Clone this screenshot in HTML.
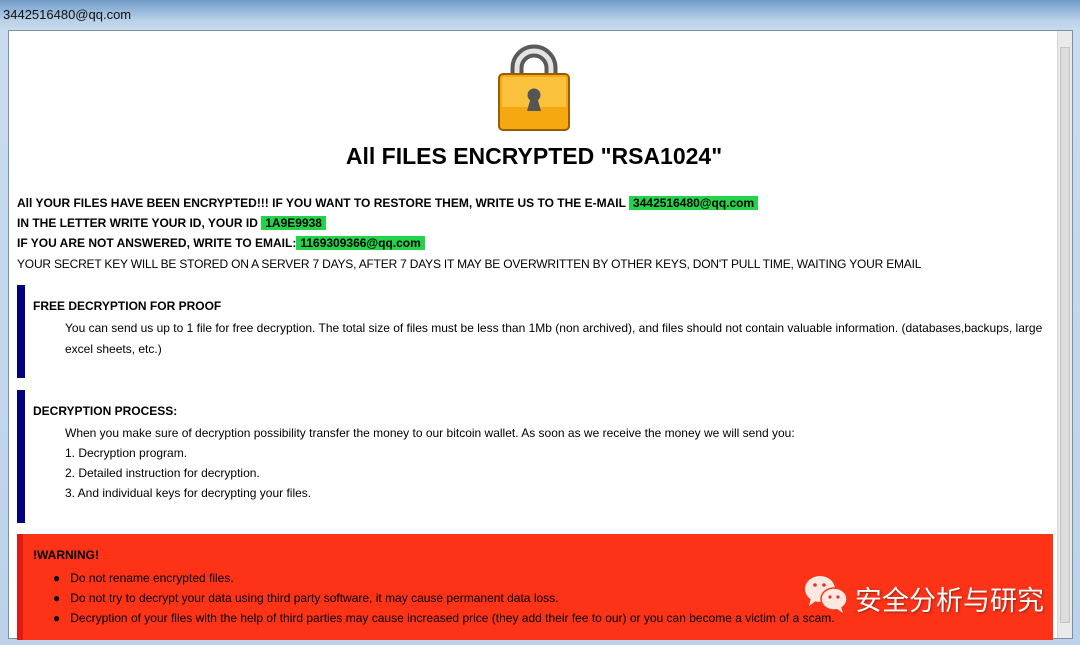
<!DOCTYPE html>
<html><head><meta charset="utf-8"><style>
*{margin:0;padding:0;box-sizing:border-box}
body{width:1080px;height:645px;overflow:hidden;background:#8fb3d6;font-family:"Liberation Sans",sans-serif;position:relative}
.frame{position:absolute;left:0;top:0;width:1080px;height:645px;background:linear-gradient(#6f9cc8 0,#b8d0e8 20px,#c9dcef 30px,#bcd2ea 100%)}
.tt{position:absolute;left:3px;top:7px;font-size:13px;color:#111}
.content{position:absolute;left:8px;top:30px;width:1065px;height:609px;background:#fff;border:1px solid #7d8fa3}
.sb{position:absolute;right:0;top:0;width:15px;height:100%;background:#eaeaea;border-left:1px solid #d5d5d5}
.sb .th{position:absolute;left:2px;top:16px;width:10px;height:576px;background:#dcdcdc;border:1px solid #c4c4c4}
.t{position:absolute;white-space:nowrap;font-size:12px;color:#000}
.b{font-weight:bold}
.g{background:#23d34a;padding:0 4px}
.bar{position:absolute;left:8px;width:8px;background:#000080}
.red{position:absolute;left:8px;top:503px;width:1036px;height:106px;background:#fd3318;border-left:6px solid #e01a10}
</style></head><body>
<div class="frame"></div>
<div class="tt">3442516480@qq.com</div>
<div class="content">
<svg style="position:absolute;left:487px;top:10px" width="76" height="92" viewBox="0 0 76 92">
<path d="M21 42 V27 a17 17 0 0 1 34 0 V42" fill="none" stroke="#5a5a5a" stroke-width="13"/>
<path d="M21 42 V27 a17 17 0 0 1 34 0 V42" fill="none" stroke="#e4e4e4" stroke-width="5"/>
<rect x="3" y="33" width="70" height="56" rx="4" fill="#f6a810" stroke="#9a5c00" stroke-width="2"/>
<rect x="6" y="36" width="64" height="30" fill="#fcd560" opacity=".55"/>
<circle cx="38" cy="54" r="6.5" fill="#555"/><path d="M35 56 L31 70 H45 L41 56Z" fill="#555"/>
</svg>
<div class="t b" style="left:0;width:1050px;text-align:center;top:112px;font-size:23px">All FILES ENCRYPTED "RSA1024"</div>
<div class="t b" style="left:8px;top:165px">All YOUR FILES HAVE BEEN ENCRYPTED!!! IF YOU WANT TO RESTORE THEM, WRITE US TO THE E-MAIL <span class="g">3442516480@qq.com</span></div>
<div class="t b" style="left:8px;top:185px">IN THE LETTER WRITE YOUR ID, YOUR ID <span class="g">1A9E9938</span></div>
<div class="t b" style="left:8px;top:205px">IF YOU ARE NOT ANSWERED, WRITE TO EMAIL:<span class="g">1169309366@qq.com</span></div>
<div class="t" style="left:8px;top:226px;letter-spacing:-0.2px">YOUR SECRET KEY WILL BE STORED ON A SERVER 7 DAYS, AFTER 7 DAYS IT MAY BE OVERWRITTEN BY OTHER KEYS, DON'T PULL TIME, WAITING YOUR EMAIL</div>
<div class="bar" style="top:254px;height:93px"></div>
<div class="t b" style="left:24px;top:268px">FREE DECRYPTION FOR PROOF</div>
<div class="t" style="left:56px;top:290px">You can send us up to 1 file for free decryption. The total size of files must be less than 1Mb (non archived), and files should not contain valuable information. (databases,backups, large</div>
<div class="t" style="left:56px;top:311px">excel sheets, etc.)</div>
<div class="bar" style="top:359px;height:133px"></div>
<div class="t b" style="left:24px;top:373px">DECRYPTION PROCESS:</div>
<div class="t" style="left:56px;top:395px">When you make sure of decryption possibility transfer the money to our bitcoin wallet. As soon as we receive the money we will send you:</div>
<div class="t" style="left:56px;top:415px">1. Decryption program.</div>
<div class="t" style="left:56px;top:435px">2. Detailed instruction for decryption.</div>
<div class="t" style="left:56px;top:455px">3. And individual keys for decrypting your files.</div>
<div class="red">
<div class="t b" style="left:10px;top:14px">!WARNING!</div>
<div class="t" style="left:30px;top:37px">●&nbsp;&nbsp;&nbsp;Do not rename encrypted files.</div>
<div class="t" style="left:30px;top:57px">●&nbsp;&nbsp;&nbsp;Do not try to decrypt your data using third party software, it may cause permanent data loss.</div>
<div class="t" style="left:30px;top:77px">●&nbsp;&nbsp;&nbsp;Decryption of your files with the help of third parties may cause increased price (they add their fee to our) or you can become a victim of a scam.</div>
<svg style="position:absolute;left:780px;top:40px" width="46" height="40" viewBox="0 0 46 40">
<ellipse cx="17" cy="15" rx="15" ry="13" fill="#fde8e0"/><path d="M8 24 L6 32 L14 26Z" fill="#fde8e0"/>
<ellipse cx="31" cy="25" rx="13" ry="11" fill="#fde8e0" stroke="#fd3318" stroke-width="1.5"/><path d="M38 33 L40 39 L33 34Z" fill="#fde8e0"/>
<circle cx="12" cy="11" r="1.8" fill="#d33"/><circle cx="21" cy="11" r="1.8" fill="#d33"/>
<circle cx="27" cy="23" r="1.6" fill="#d33"/><circle cx="35" cy="23" r="1.6" fill="#d33"/>
</svg>
<div class="t" style="left:832px;top:45px;font-size:27px;color:#fff;font-family:'Liberation Sans','Noto Sans CJK SC',sans-serif;text-shadow:1px 1px 2px rgba(0,0,0,.4)">安全分析与研究</div>
</div>
<div class="sb"><div class="th"></div></div>
</div>
</body></html>
